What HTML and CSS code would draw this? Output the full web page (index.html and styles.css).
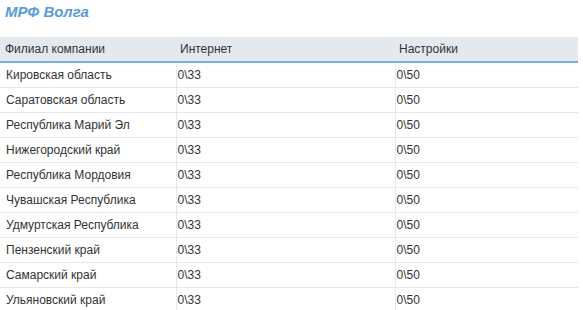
FILE: index.html
```html
<!DOCTYPE html>
<html lang="ru">
<head>
<meta charset="utf-8">
<title>МРФ Волга</title>
<link rel="stylesheet" href="styles.css">
</head>
<body>
<h2 class="title">МРФ Волга</h2>
<table class="grid">
  <colgroup>
    <col class="c1"><col class="c2"><col class="c3">
  </colgroup>
  <thead>
    <tr><th>Филиал компании</th><th>Интернет</th><th>Настройки</th></tr>
  </thead>
  <tbody>
    <tr><td>Кировская область</td><td>0\33</td><td>0\50</td></tr>
    <tr><td>Саратовская область</td><td>0\33</td><td>0\50</td></tr>
    <tr><td>Республика Марий Эл</td><td>0\33</td><td>0\50</td></tr>
    <tr><td>Нижегородский край</td><td>0\33</td><td>0\50</td></tr>
    <tr><td>Республика Мордовия</td><td>0\33</td><td>0\50</td></tr>
    <tr><td>Чувашская Республика</td><td>0\33</td><td>0\50</td></tr>
    <tr><td>Удмуртская Республика</td><td>0\33</td><td>0\50</td></tr>
    <tr><td>Пензенский край</td><td>0\33</td><td>0\50</td></tr>
    <tr><td>Самарский край</td><td>0\33</td><td>0\50</td></tr>
    <tr><td>Ульяновский край</td><td>0\33</td><td>0\50</td></tr>
  </tbody>
</table>
</body>
</html>
```
FILE: styles.css
```css
html, body {
  margin: 0;
  padding: 0;
  background: #ffffff;
}
body {
  font-family: "Liberation Sans", Arial, sans-serif;
  color: #333333;
  width: 583px;
  height: 310px;
  overflow: hidden;
}
.title {
  margin: 0;
  padding: 2px 0 0 5px;
  height: 36px;
  box-sizing: border-box;
  font-size: 15px;
  line-height: 20px;
  font-weight: bold;
  font-style: italic;
  color: #5b9bd5;
}
.grid {
  width: 578px;
  border-collapse: collapse;
  table-layout: fixed;
  font-size: 12px;
  margin-top: 1px;
}
.c1 { width: 176px; }
.c2 { width: 219px; }
.c3 { width: 183px; }
.grid th {
  background: #e4e9ef;
  font-weight: normal;
  text-align: left;
  height: 24px;
  padding: 0 0 0 5px;
  border-bottom: 2px solid #7fafd6;
  color: #333333;
}
.grid th + th { padding-left: 4px; }
.grid td {
  height: 24px;
  padding: 0 0 0 6px;
  border-bottom: 1px solid #e6e8eb;
}
.grid td + td {
  border-left: 1px solid #e6e8eb;
  padding-left: 1px;
}
```
